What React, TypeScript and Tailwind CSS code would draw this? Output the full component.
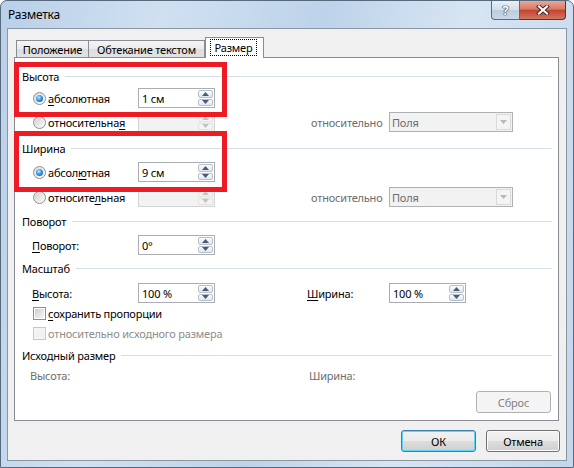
import type { ReactNode } from "react";

function U({ children }: { children: ReactNode }) {
  return <span className="underline underline-offset-[2px]">{children}</span>;
}

function Radio({ checked }: { checked?: boolean }) {
  return (
    <span className="flex h-[13px] w-[13px] shrink-0 items-center justify-center rounded-full border border-[#8e8f8f] bg-[linear-gradient(135deg,#dcdcdc,#fdfdfd)]">
      {checked ? (
        <span className="h-[7px] w-[7px] rounded-full bg-[radial-gradient(circle_at_40%_35%,#bfe8ff_0%,#2f8fe0_50%,#0b4a8c_100%)]" />
      ) : (
        <span className="h-[9px] w-[9px] rounded-full bg-[linear-gradient(135deg,#d2d2d2,#f8f8f8)]" />
      )}
    </span>
  );
}

function Check({ disabled }: { disabled?: boolean }) {
  return (
    <span
      className={`flex h-[13px] w-[13px] shrink-0 items-center justify-center border ${
        disabled ? "border-[#c8c8c8] bg-[#f6f6f6]" : "border-[#8e8f8f] bg-white"
      }`}
    >
      <span
        className={`h-[9px] w-[9px] ${
          disabled ? "bg-[#f2f2f2]" : "bg-[linear-gradient(135deg,#cfcfcf,#f7f7f7)]"
        }`}
      />
    </span>
  );
}

function Arrow({ up, color }: { up?: boolean; color: string }) {
  return (
    <svg width="7" height="4" viewBox="0 0 7 4">
      <path d={up ? "M0 4 L3.5 0 L7 4Z" : "M0 0 L3.5 4 L7 0Z"} fill={color} />
    </svg>
  );
}

function SpinBtn({ up, disabled }: { up?: boolean; disabled?: boolean }) {
  return (
    <div
      className={`flex flex-1 items-center justify-center rounded-[2px] border ${
        disabled
          ? "border-[#e3e3e3] bg-[#f4f4f4]"
          : "border-[#b7c1cc] bg-[linear-gradient(#fbfcfd,#e1e7ee)]"
      }`}
    >
      <Arrow up={up} color={disabled ? "#c4c4c4" : "#4a5b7a"} />
    </div>
  );
}

function Spin({ value, disabled }: { value?: string; disabled?: boolean }) {
  return (
    <div
      className={`flex h-[20px] w-[77px] shrink-0 border ${
        disabled ? "border-[#d5d5d5] bg-[#f2f2f2]" : "border-[#abadb3] bg-white"
      }`}
    >
      <div className="flex flex-1 items-center pl-[3px]">{value}</div>
      <div className="flex w-[16px] flex-col gap-[1px] py-[1px] pr-[1px]">
        <SpinBtn up disabled={disabled} />
        <SpinBtn disabled={disabled} />
      </div>
    </div>
  );
}

function Combo() {
  return (
    <div className="flex h-[20px] w-[124px] shrink-0 border border-[#adb2b5] bg-[#f2f2f2] text-[#6d6d6d]">
      <div className="flex flex-1 items-center pl-[2px]">Поля</div>
      <div className="m-[1px] flex w-[15px] items-center justify-center border border-[#dadada] bg-[#f4f4f4]">
        <Arrow color="#b8b8b8" />
      </div>
    </div>
  );
}

function Group({ label, className }: { label: string; className: string }) {
  return (
    <div className={`flex h-[16px] items-center gap-[6px] pl-[7px] pr-[6px] ${className}`}>
      <span>{label}</span>
      <div className="h-px flex-1 bg-[#d5dfe5]" />
    </div>
  );
}

function Btn({
  children,
  isDefault,
  disabled,
  className,
}: {
  children: ReactNode;
  isDefault?: boolean;
  disabled?: boolean;
  className?: string;
}) {
  let look =
    "border-[#707070] bg-[linear-gradient(#f2f2f2_0%,#ebebeb_50%,#dddddd_51%,#cfcfcf_100%)] shadow-[inset_0_0_0_1px_#fbfbfb]";
  if (isDefault)
    look =
      "border-[#3c7fb1] bg-[linear-gradient(#f2f2f2_0%,#ebebeb_50%,#dddddd_51%,#cfcfcf_100%)] shadow-[inset_0_0_0_1px_#5fd3f9]";
  if (disabled) look = "border-[#adb2b5] bg-[#f4f4f4] text-[#838383]";
  return (
    <div className={`flex h-[22px] items-center justify-center rounded-[3px] border ${look} ${className}`}>
      {children}
    </div>
  );
}

export default function App() {
  return (
    <div className="h-[468px] w-[574px] bg-white font-['Noto_Sans',sans-serif] text-[11px] leading-none tracking-[-0.2px] text-black">
      <div className="flex h-full w-full flex-col rounded-t-[7px] border border-[#56697d] bg-[linear-gradient(100deg,#b9d0e9_0%,#d0e0f1_25%,#bdd3ea_50%,#d7e5f3_72%,#c2d7ec_100%)]">
        {/* title bar */}
        <div className="flex h-[27px] shrink-0 items-start justify-between">
          <div className="flex h-[27px] items-center pl-[7px] text-[12px]">Разметка</div>
          <div className="mr-[7px] flex">
            <div className="flex h-[19px] w-[29px] items-center justify-center rounded-bl-[4px] border border-t-0 border-[#5b6c80] bg-[linear-gradient(#e8eff7_0%,#d3dfec_50%,#bccddf_51%,#c9d8e8_100%)] text-[13px] font-bold text-white [text-shadow:0_0_1px_#1d2b3a,0_0_1px_#1d2b3a,0_0_1px_#1d2b3a]">
              ?
            </div>
            <div className="flex h-[19px] w-[46px] items-center justify-center rounded-br-[4px] border border-l-0 border-t-0 border-[#6b2c22] bg-[linear-gradient(#e8a696_0%,#d97a66_45%,#c4452f_52%,#d4765f_100%)]">
              <svg width="14" height="10" viewBox="0 0 14 10">
                <path d="M3 1.5 L11 8.5 M11 1.5 L3 8.5" stroke="#3b2420" strokeWidth="4" strokeLinecap="square" />
                <path d="M3 1.5 L11 8.5 M11 1.5 L3 8.5" stroke="#ffffff" strokeWidth="2.2" strokeLinecap="square" />
              </svg>
            </div>
          </div>
        </div>

        {/* client */}
        <div className="mx-[6px] flex h-[433px] flex-col border border-[#8b96a3] bg-[#f0f0f0]">
          {/* tabs */}
          <div className="flex h-[28px] shrink-0 items-end pl-[8px]">
            <div className="flex h-[17px] w-[73px] items-center justify-center border border-b-0 border-[#898c95] bg-[linear-gradient(#f4f4f4_0%,#ebebeb_50%,#dedede_51%,#e2e2e2_100%)]">
              Положение
            </div>
            <div className="flex h-[17px] w-[116px] items-center justify-center border border-b-0 border-l-0 border-[#898c95] bg-[linear-gradient(#f4f4f4_0%,#ebebeb_50%,#dedede_51%,#e2e2e2_100%)]">
              Обтекание текстом
            </div>
            <div className="relative z-10 -mb-px flex h-[21px] w-[59px] items-start border border-b-0 border-[#898c95] bg-white pl-[4px] pt-[1px]">
              <span className="flex h-[17px] w-[47px] items-center justify-center border border-dotted border-black">
                Размер
              </span>
            </div>
          </div>

          {/* panel */}
          <div className="relative ml-[6px] flex h-[364px] w-[545px] shrink-0 flex-col border border-[#898c95] bg-white pt-[10px]">
            <Group label="Высота" className="mt-0" />
            <div className="mt-[4px] flex h-[20px] items-center">
              <div className="flex w-[123px] items-center gap-[2px] pl-[18px]">
                <Radio checked />
                <span>
                  <U>а</U>бсолютная
                </span>
              </div>
              <Spin value="1 см" />
            </div>
            <div className="mt-[4px] flex h-[20px] items-center">
              <div className="flex w-[123px] items-center gap-[2px] pl-[18px]">
                <Radio />
                <span>
                  относительна<U>я</U>
                </span>
              </div>
              <Spin disabled />
              <div className="w-[96px]" />
              <div className="w-[78px] text-[#6d6d6d]">относительно</div>
              <Combo />
            </div>

            <Group label="Ширина" className="mt-[8px]" />
            <div className="mt-[6px] flex h-[20px] items-center">
              <div className="flex w-[123px] items-center gap-[2px] pl-[18px]">
                <Radio checked />
                <span>
                  абсол<U>ю</U>тная
                </span>
              </div>
              <Spin value="9 см" />
            </div>
            <div className="mt-[5px] flex h-[20px] items-center">
              <div className="flex w-[123px] items-center gap-[2px] pl-[18px]">
                <Radio />
                <span>
                  относите<U>л</U>ьная
                </span>
              </div>
              <Spin disabled />
              <div className="w-[96px]" />
              <div className="w-[78px] text-[#6d6d6d]">относительно</div>
              <Combo />
            </div>

            <Group label="Поворот" className="mt-[6px]" />
            <div className="mt-[6px] flex h-[20px] items-center">
              <div className="w-[123px] pl-[17px]">
                <U>П</U>оворот:
              </div>
              <Spin value="0°" />
            </div>

            <Group label="Масштаб" className="mt-[5px]" />
            <div className="mt-[7px] flex h-[20px] items-center">
              <div className="w-[123px] pl-[17px]">
                <U>В</U>ысота:
              </div>
              <Spin value="100 %" />
              <div className="w-[92px]" />
              <div className="w-[82px]">
                <U>Ш</U>ирина:
              </div>
              <Spin value="100 %" />
            </div>
            <div className="mt-[2px] flex h-[16px] items-center gap-[2px] pl-[18px]">
              <Check />
              <span>
                <U>с</U>охранить пропорции
              </span>
            </div>
            <div className="mt-[4px] flex h-[16px] items-center gap-[2px] pl-[18px]">
              <Check disabled />
              <span className="text-[#8d8d8d]">относительно исходного размера</span>
            </div>

            <Group label="Исходный размер" className="mt-[6px]" />
            <div className="mt-[4px] flex h-[16px] items-center text-[#6d6d6d]">
              <div className="w-[294px] pl-[15px]">Высота:</div>
              <div>Ширина:</div>
            </div>
            <div className="mt-[8px] flex justify-end pr-[7px]">
              <Btn disabled className="w-[75px]">
                Сброс
              </Btn>
            </div>

            {/* red annotation frames */}
            <div className="absolute left-[-1px] top-[4px] h-[55px] w-[213px] border-[5px] border-[#ed1c24]" />
            <div className="absolute left-[-1px] top-[73px] h-[61px] w-[213px] border-[5px] border-[#ed1c24]" />
          </div>

          {/* dialog buttons */}
          <div className="mt-[9px] flex justify-end gap-[10px] pr-[6px]">
            <Btn isDefault className="w-[75px]">
              ОК
            </Btn>
            <Btn className="w-[74px]">Отмена</Btn>
          </div>
        </div>
      </div>
    </div>
  );
}
